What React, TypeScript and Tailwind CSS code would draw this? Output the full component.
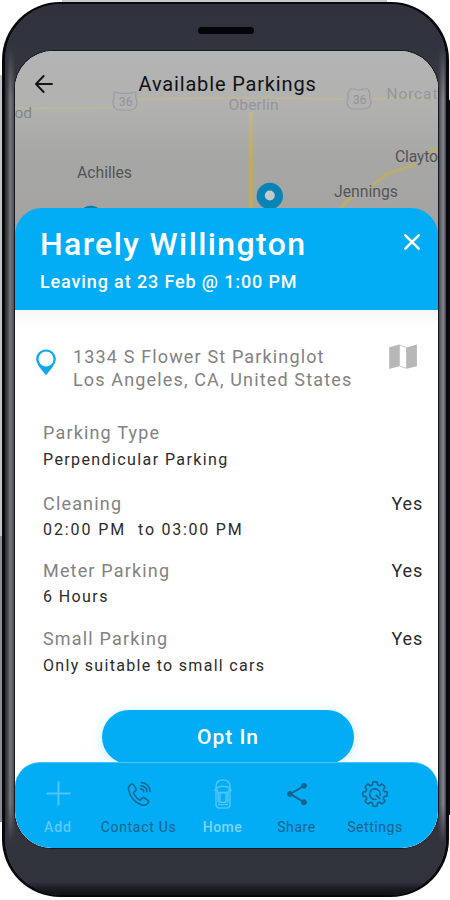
import type { ReactNode } from "react";

function BackArrow() {
  return (
    <svg className="h-[18px] w-[18px]" viewBox="0 0 18 18" fill="none" stroke="#151515" strokeWidth="1.9" strokeLinecap="round" strokeLinejoin="round">
      <path d="M17 9H1.200M8.600 1L1 9l7.600 8" />
    </svg>
  );
}

function CloseIcon() {
  return (
    <svg className="h-[18px] w-[18px]" viewBox="0 0 18 18" fill="none" stroke="#fff" strokeWidth="2.500" strokeLinecap="round">
      <path d="M2.300 2.300l13.400 13.400M15.700 2.300L2.300 15.700" />
    </svg>
  );
}

function PinIcon() {
  return (
    <svg className="h-[27px] w-5" viewBox="0 0 20 27">
      <path fillRule="evenodd" fill="#0ea9ee" d="M10 .4C4.600.4.2 4.700.2 10c0 5.200 5.600 11.200 9.800 16.200 4.200-5 9.800-11 9.800-16.200C19.800 4.700 15.400.4 10 .4zM10 2.500a7.500 7.500 0 1 1 0 15 7.500 7.500 0 0 1 0-15z" />
    </svg>
  );
}

function FoldedMapIcon() {
  return (
    <svg className="h-[26px] w-7" viewBox="0 0 28 26">
      <path fill="#b7b7b7" d="M.2 3.200L10.500.5v21.700L.2 25z" />
      <path fill="#fff" stroke="#c4c4c4" strokeWidth=".9" d="M10.500.9l7 2.800v20.600l-7-2.300z" />
      <path fill="#b7b7b7" d="M17.600 3.400L27.900.6v21.600l-10.300 2.600z" />
    </svg>
  );
}

function PlusIcon() {
  return (
    <svg className="h-7 w-7" viewBox="0 0 28 28" fill="none" stroke="#4fc4f8" strokeWidth="2">
      <path d="M14.500 1.500v24M2.500 13.500h24" />
    </svg>
  );
}

function CallIcon() {
  return (
    <svg className="h-[26px] w-[26px]" viewBox="0 0 28 28" fill="none" stroke="#17638a" strokeWidth="1.600" strokeLinecap="round" strokeLinejoin="round">
      <path d="M5.400 3.700C3.300 5 2.300 7 2.700 9.200c1.300 7.800 7.500 14.900 14.600 16.600 2.700.6 5.200-.3 6.700-2.300.7-.9.500-2-.4-2.700l-3.800-2.700c-.9-.6-1.900-.4-2.600.4l-1.100 1.400c-.5.6-1.200.7-1.900.3-2.600-1.600-4.700-4-6-6.800-.3-.7-.1-1.400.5-1.800l1.500-1c.8-.6 1-1.600.5-2.500L8.300 4.400c-.6-1-1.800-1.300-2.900-.7z" />
      <path d="M16.500 1.600a9.600 9.600 0 0 1 9.400 9.600M15.900 5a6.600 6.600 0 0 1 6.700 6.500M15.500 8.300a3.600 3.600 0 0 1 3.700 3.500" />
    </svg>
  );
}

function CarIcon() {
  return (
    <svg className="h-[30px] w-5" viewBox="0 0 20 30" fill="none" stroke="#4fc4f8" strokeWidth="1.500" strokeLinejoin="round">
      <path d="M3 7.500C3 3 5 1 10 1s7 2 7 6.500v17.800c0 2.400-1 3.700-3.200 3.700H6.200C4 29 3 27.700 3 25.300z" />
      <path d="M3.200 9.600C5.500 6.400 14.500 6.400 16.800 9.600l-1.900 4H5.100z" />
      <path d="M6.900 13.800h6.200v9.400H6.900zM5 25.600h10M5.100 13.600v9.800M14.900 13.600v9.800M3 10.400l-1.700 1.500M17 10.400l1.700 1.500" />
    </svg>
  );
}

function ShareIcon() {
  return (
    <svg className="h-7 w-7" viewBox="0 0 28 28" fill="#17638a" stroke="#17638a">
      <path d="M21 5.700L7.500 14 21 22.200" fill="none" strokeWidth="1.900" />
      <circle cx="7" cy="14" r="2.500" />
      <circle cx="21" cy="5.700" r="2.500" />
      <circle cx="21" cy="22.200" r="2.500" />
    </svg>
  );
}

const gearTeeth = Array.from({ length: 8 }, (_, i) => {
  const at = (radius: number, degrees: number) => {
    const a = ((i * 45 + degrees - 90) * Math.PI) / 180;
    return `${(14 + radius * Math.cos(a)).toFixed(2)} ${(14 + radius * Math.sin(a)).toFixed(2)}`;
  };
  return `${i === 0 ? "M" : "L"}${at(9.8, -14)}L${at(12, -11)}Q${at(13, 0)} ${at(12, 11)}L${at(9.8, 14)}Q${at(8.8, 22.5)} ${at(9.8, 31)}`;
}).join("");

function GearIcon() {
  return (
    <svg className="h-7 w-7" viewBox="0 0 28 28" fill="none" stroke="#17638a" strokeWidth="1.600" strokeLinejoin="round">
      <path d={gearTeeth + "Z"} />
      <path d="M15 19.300a5.300 5.300 0 1 1 4-3.800M15.200 15.200l3.400 3.400" strokeLinecap="round" />
    </svg>
  );
}

function MapView() {
  return (
    <svg className="absolute inset-0 h-[190px] w-[423px]" viewBox="15 51 423 190" fontFamily="Roboto, sans-serif">
      <defs>
        <linearGradient id="ground" x1="0" y1="0" x2="0" y2="1">
          <stop offset="0" stopColor="#b4b4b4" />
          <stop offset=".3" stopColor="#b1b1b0" />
          <stop offset=".55" stopColor="#a7a7a6" />
          <stop offset="1" stopColor="#a3a2a0" />
        </linearGradient>
        <linearGradient id="road" gradientUnits="userSpaceOnUse" x1="0" y1="108" x2="0" y2="160">
          <stop offset="0" stopColor="#bdb89e" />
          <stop offset="1" stopColor="#c0ab5e" />
        </linearGradient>
      </defs>
      <rect x="15" y="51" width="423" height="190" fill="url(#ground)" />
      <path d="M15 108.500L113 107.500M137 99L250 97.500L344 99M372 99L438 97" fill="none" stroke="#b9b79e" strokeWidth="2.500" />
      <path d="M250.800 112V215" stroke="url(#road)" strokeWidth="4.200" fill="none" />
      <path d="M338 212L347 201L375 184L386 174.500L414 165L427 152L438 149" stroke="#b7ae70" strokeWidth="3.200" fill="none" />
      <g fill="#b2b2b2" stroke="#9c9c9e" strokeWidth="1.200">
        <path d="M114 92q11 3 22 0q-1 5 1 10q0 8-7 8h-10q-7 0-7-8q2-5 1-10z" />
        <path d="M350 89h5q4 2 8 0h5l2 5q-1 4 1 7q0 8-7 8h-10q-7 0-7-8q2-3 1-7z" />
      </g>
      <g fill="#939396" fontSize="12">
        <text x="119" y="106">36</text>
        <text x="353" y="104">36</text>
      </g>
      <g fontSize="15.500" fill="#95959a">
        <text x="228.500" y="110" textLength="50">Oberlin</text>
        <text x="386.500" y="98.500" textLength="51">Norcat</text>
        <text x="14.500" y="118" fill="#868686">od</text>
      </g>
      <g fontSize="15.800" fill="#545456" stroke="#a8a8a7" strokeWidth="2" paintOrder="stroke">
        <text x="77" y="178" textLength="55">Achilles</text>
        <text x="334" y="197" textLength="64">Jennings</text>
        <text x="395" y="162" textLength="43">Clayto</text>
      </g>
      <circle cx="269.800" cy="196" r="13.200" fill="#0a84b4" />
      <circle cx="269.800" cy="195.500" r="5" fill="#c4c9cc" />
      <circle cx="90.800" cy="219" r="13.200" fill="#0a7eac" />
    </svg>
  );
}

const label = "text-[18px] leading-[22px] tracking-[1.17px] text-[#828282]";
const value = "text-[16px] leading-6 text-[#2b2b2b]";

function Detail({ className, title, yes, children }: { className: string; title: string; yes?: boolean; children: ReactNode }) {
  return (
    <div className={className}>
      <div className="flex justify-between pr-[15px]">
        <span className={label}>{title}</span>
        {yes && <span className="text-[18px] leading-[22px] tracking-[0.8px] text-[#2b2b2b]">Yes</span>}
      </div>
      {children}
    </div>
  );
}

function Tab({ className, icon, children }: { className: string; icon: ReactNode; children: ReactNode }) {
  return (
    <div className={"flex shrink-0 flex-col items-center " + className}>
      <div className="flex h-[30px] items-center justify-center">{icon}</div>
      <span className="mt-[10px] text-[14px] leading-4 whitespace-nowrap">{children}</span>
    </div>
  );
}

export default function App() {
  return (
    <div className="relative h-[900px] w-[450px] overflow-hidden bg-white font-['Roboto',sans-serif]">
      {/* rim light and side buttons behind the handset */}
      <div className="absolute top-0 left-[62px] h-2 w-[325px] bg-[#c9c9ca]" />
      <div className="absolute top-[75px] left-0 h-[461px] w-2 bg-[#c4c4c5]" />
      <div className="absolute top-[536px] left-0 h-[286px] w-2 bg-[#8e8e90]" />
      <div className="absolute top-[100px] right-0 h-[715px] w-2 bg-[#0a0c14]" />
      <div className="relative mt-[2px] ml-[2px] h-[895px] w-[447px] rounded-[58px] bg-[#07080d] px-[3px] pt-[2px] pb-[2px]">
        <div className="flex h-full flex-col overflow-hidden rounded-[56px] bg-[linear-gradient(90deg,#29292d_0px,#4b4a50_3px,#77767d_5px,#5a595f_8px,#39393e_10px,#39393e_433px,#55555d_435px,#85858f_438px,#5d5d67_440px,#10131d_442px)]">
          <div className="h-full rounded-[54px] bg-[linear-gradient(180deg,#2f323c_0px,#31343e_42px,transparent_95px,transparent_800px,#31333d_838px,#30323c_878px,#1c1d23_884px,#101116_100%)] px-[10px] pt-[47px]">
            <div className="relative flex h-[797px] w-[423px] flex-col overflow-hidden rounded-t-[38px] rounded-b-[37px] bg-white shadow-[0_0_0_1px_#17191f]">
              <div className="relative h-[157px] shrink-0">
                <MapView />
                <div className="relative flex h-[65px] items-center pl-[19.5px]">
                  <BackArrow />
                  <h1 className="ml-[86px] text-[20px] leading-6 tracking-[0.84px] text-[#111]">Available Parkings</h1>
                </div>
              </div>

              <div className="relative flex grow flex-col">
                <div className="flex h-[102px] shrink-0 items-start justify-between rounded-t-[27px] bg-[#02adf6] pr-[17px] pl-[25px] text-white">
                  <div>
                    <h2 className="pt-4 text-[32px] leading-10 font-medium tracking-[1.38px]">Harely Willington</h2>
                    <p className="mt-1.5 text-[18px] leading-6 font-medium tracking-[0.87px]">Leaving at 23 Feb @ 1:00 PM</p>
                  </div>
                  <button className="mt-[25px]"><CloseIcon /></button>
                </div>

                <div className="grow bg-[linear-gradient(180deg,#f6f6f7_0px,#fff_18px)]">
                  <div className="flex pt-9 pl-[21px]">
                    <div className="mt-[3px]"><PinIcon /></div>
                    <p className="ml-[17px] w-[298px] text-[18px] leading-[22.5px] tracking-[1.15px] whitespace-nowrap text-[#828282]">
                      1334 S Flower St Parkinglot
                      <br />
                      Los Angeles, CA, United States
                    </p>
                    <div className="ml-[18px] -mt-[2px]"><FoldedMapIcon /></div>
                  </div>

                  <div className="pl-7">
                    <Detail className="mt-[31px]" title="Parking Type">
                      <p className={value + " mt-1 tracking-[1.4px]"}>Perpendicular Parking</p>
                    </Detail>
                    <Detail className="mt-[21px]" title="Cleaning" yes>
                      <p className={value + " mt-[3px] flex gap-3 tracking-[1.9px]"}>
                        <span>02:00 PM</span>
                        <span className="tracking-[1.75px]">to 03:00 PM</span>
                      </p>
                    </Detail>
                    <Detail className="mt-[18px]" title="Meter Parking" yes>
                      <p className={value + " mt-[3px] tracking-[1.4px]"}>6 Hours</p>
                    </Detail>
                    <Detail className="mt-[19px]" title="Small Parking" yes>
                      <p className={value + " mt-1 tracking-[1.3px]"}>Only suitable to small cars</p>
                    </Detail>
                  </div>

                  <button className="mt-[32px] ml-[87px] block h-[54px] w-[252px] rounded-full bg-[#02adf6] text-[21px] leading-[53px] font-medium tracking-[0.97px] text-white shadow-[0_2px_14px_rgba(2,173,246,0.22)]">
                    Opt In
                  </button>
                </div>
              </div>

              <nav className="relative -mt-[86px] flex h-[86px] shrink-0 rounded-t-[25px] border-t border-[#4cc3f8] bg-[#02adf6] pt-[16px]">
                <Tab className="w-[86px] font-medium tracking-[0.9px] text-[#5fc8f8]" icon={<PlusIcon />}>Add</Tab>
                <Tab className="w-[75px] tracking-[0.7px] text-[#17638a]" icon={<CallIcon />}>Contact Us</Tab>
                <Tab className="w-[93px] font-medium tracking-[0.47px] text-[#7fd3fa]" icon={<CarIcon />}>Home</Tab>
                <Tab className="w-[55px] tracking-[0.58px] text-[#17638a]" icon={<ShareIcon />}>Share</Tab>
                <Tab className="w-[102px] tracking-[0.55px] text-[#17638a]" icon={<GearIcon />}>Settings</Tab>
              </nav>
            </div>
          </div>
        </div>
        <div className="absolute top-[25px] left-[196px] h-[7px] w-[56px] rounded-full bg-[#050508]" />
      </div>
    </div>
  );
}
